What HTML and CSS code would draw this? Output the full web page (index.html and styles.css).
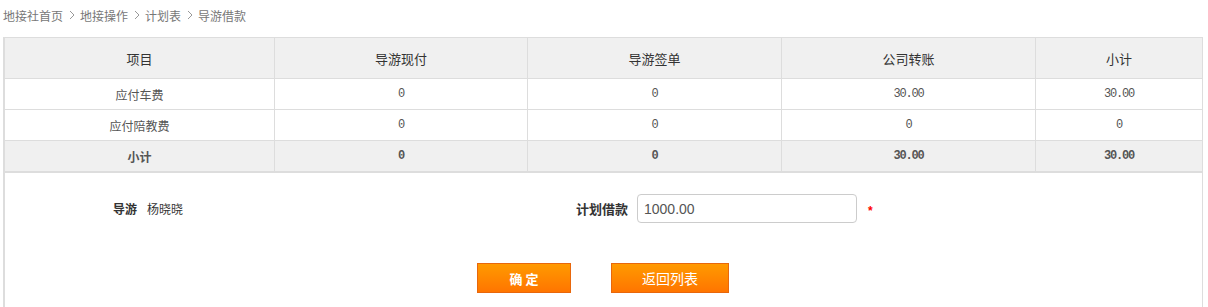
FILE: index.html
```html
<!DOCTYPE html>
<html lang="zh-CN">
<head>
<meta charset="utf-8">
<title>导游借款</title>
<link rel="stylesheet" href="styles.css">
</head>
<body>
<div class="crumb">
  <span>地接社首页</span>
  <svg class="sep" width="6" height="10" viewBox="0 0 6 10"><path d="M1 1 L5 5 L1 9" fill="none" stroke="#999" stroke-width="1"/></svg>
  <span>地接操作</span>
  <svg class="sep" width="6" height="10" viewBox="0 0 6 10"><path d="M1 1 L5 5 L1 9" fill="none" stroke="#999" stroke-width="1"/></svg>
  <span>计划表</span>
  <svg class="sep" width="6" height="10" viewBox="0 0 6 10"><path d="M1 1 L5 5 L1 9" fill="none" stroke="#999" stroke-width="1"/></svg>
  <span>导游借款</span>
</div>
<div class="panel">
  <div class="grid">
    <div class="cell head">项目</div>
    <div class="cell head">导游现付</div>
    <div class="cell head">导游签单</div>
    <div class="cell head">公司转账</div>
    <div class="cell head last">小计</div>

    <div class="cell">应付车费</div>
    <div class="cell num">0</div>
    <div class="cell num">0</div>
    <div class="cell num">30.00</div>
    <div class="cell num last">30.00</div>

    <div class="cell">应付陪教费</div>
    <div class="cell num">0</div>
    <div class="cell num">0</div>
    <div class="cell num">0</div>
    <div class="cell num last">0</div>

    <div class="cell total">小计</div>
    <div class="cell total num">0</div>
    <div class="cell total num">0</div>
    <div class="cell total num">30.00</div>
    <div class="cell total num last">30.00</div>
  </div>
  <div class="form-row">
    <div class="label">导游</div>
    <div class="value">杨晓晓</div>
    <div class="label label2">计划借款</div>
    <input class="input" type="text" value="1000.00">
    <span class="req">*</span>
  </div>
  <div class="actions">
    <button class="btn btn-ok" type="button">确 定</button>
    <button class="btn btn-back" type="button">返回列表</button>
  </div>
</div>
</body>
</html>
```
FILE: styles.css
```css
* { box-sizing: border-box; }
body {
  margin: 0;
  font-family: "Noto Sans CJK SC", "Liberation Sans", sans-serif;
  font-size: 12px;
  color: #555;
  background: #fff;
}
.crumb {
  height: 37px;
  padding: 0 0 7px 3px;
  display: flex;
  align-items: center;
  color: #777;
  font-size: 12px;
}
.crumb .sep { margin: 0 5px 0 6px; }
.panel {
  margin-left: 3px;
  width: 1200px;
  height: 270px;
  border-left: 2px solid #ddd;
  border-right: 1px solid #ddd;
  border-top: 1px solid #ddd;
}
.grid {
  display: grid;
  grid-template-columns: 270px 253px 254px 254px 166px;
  grid-template-rows: 41px;
  grid-auto-rows: 31px;
  border-bottom: 1px solid #ddd;
}
.cell {
  border-right: 1px solid #ddd;
  border-bottom: 1px solid #ddd;
  display: flex;
  align-items: center;
  justify-content: center;
  color: #555;
}
.cell.last { border-right: 0; }
.cell.head {
  background: #f0f0f0;
  font-size: 13px;
  color: #333;
}
.num {
  font-family: "Liberation Mono", "DejaVu Sans Mono", monospace;
  font-size: 12px;
  letter-spacing: -1.2px;
}
.total {
  background: #f0f0f0;
  font-weight: bold;
  color: #555;
}
.form-row {
  display: flex;
  align-items: center;
  padding-top: 21px;
  height: 50px;
}
.label {
  width: 132px;
  text-align: right;
  font-weight: bold;
  color: #333;
  font-size: 12px;
}
.value {
  width: 360px;
  padding-left: 10px;
  color: #333;
}
.label2 {
  width: 131px;
  font-size: 13px;
}
.input {
  margin-left: 9px;
  width: 220px;
  height: 29px;
  border: 1px solid #ccc;
  border-radius: 4px;
  padding: 0 6px;
  font-family: "Liberation Sans", Arial, sans-serif;
  font-size: 14px;
  color: #555;
  outline: none;
}
.req {
  margin-left: 11px;
  margin-top: 4px;
  color: #f00;
  font-size: 12px;
  font-weight: bold;
  font-family: "Liberation Sans", sans-serif;
}
.actions {
  display: flex;
  gap: 40px;
  padding-left: 472px;
  margin-top: 40px;
}
.btn {
  height: 30px;
  border: 1px solid #e8670c;
  background: linear-gradient(#ff9a00, #ff7500);
  color: #fff;
  font-family: "Noto Sans CJK SC", sans-serif;
  padding: 0;
  cursor: pointer;
}
.btn-ok {
  width: 94px;
  font-size: 13px;
  font-weight: bold;
}
.btn-back {
  width: 118px;
  font-size: 14px;
}
```
